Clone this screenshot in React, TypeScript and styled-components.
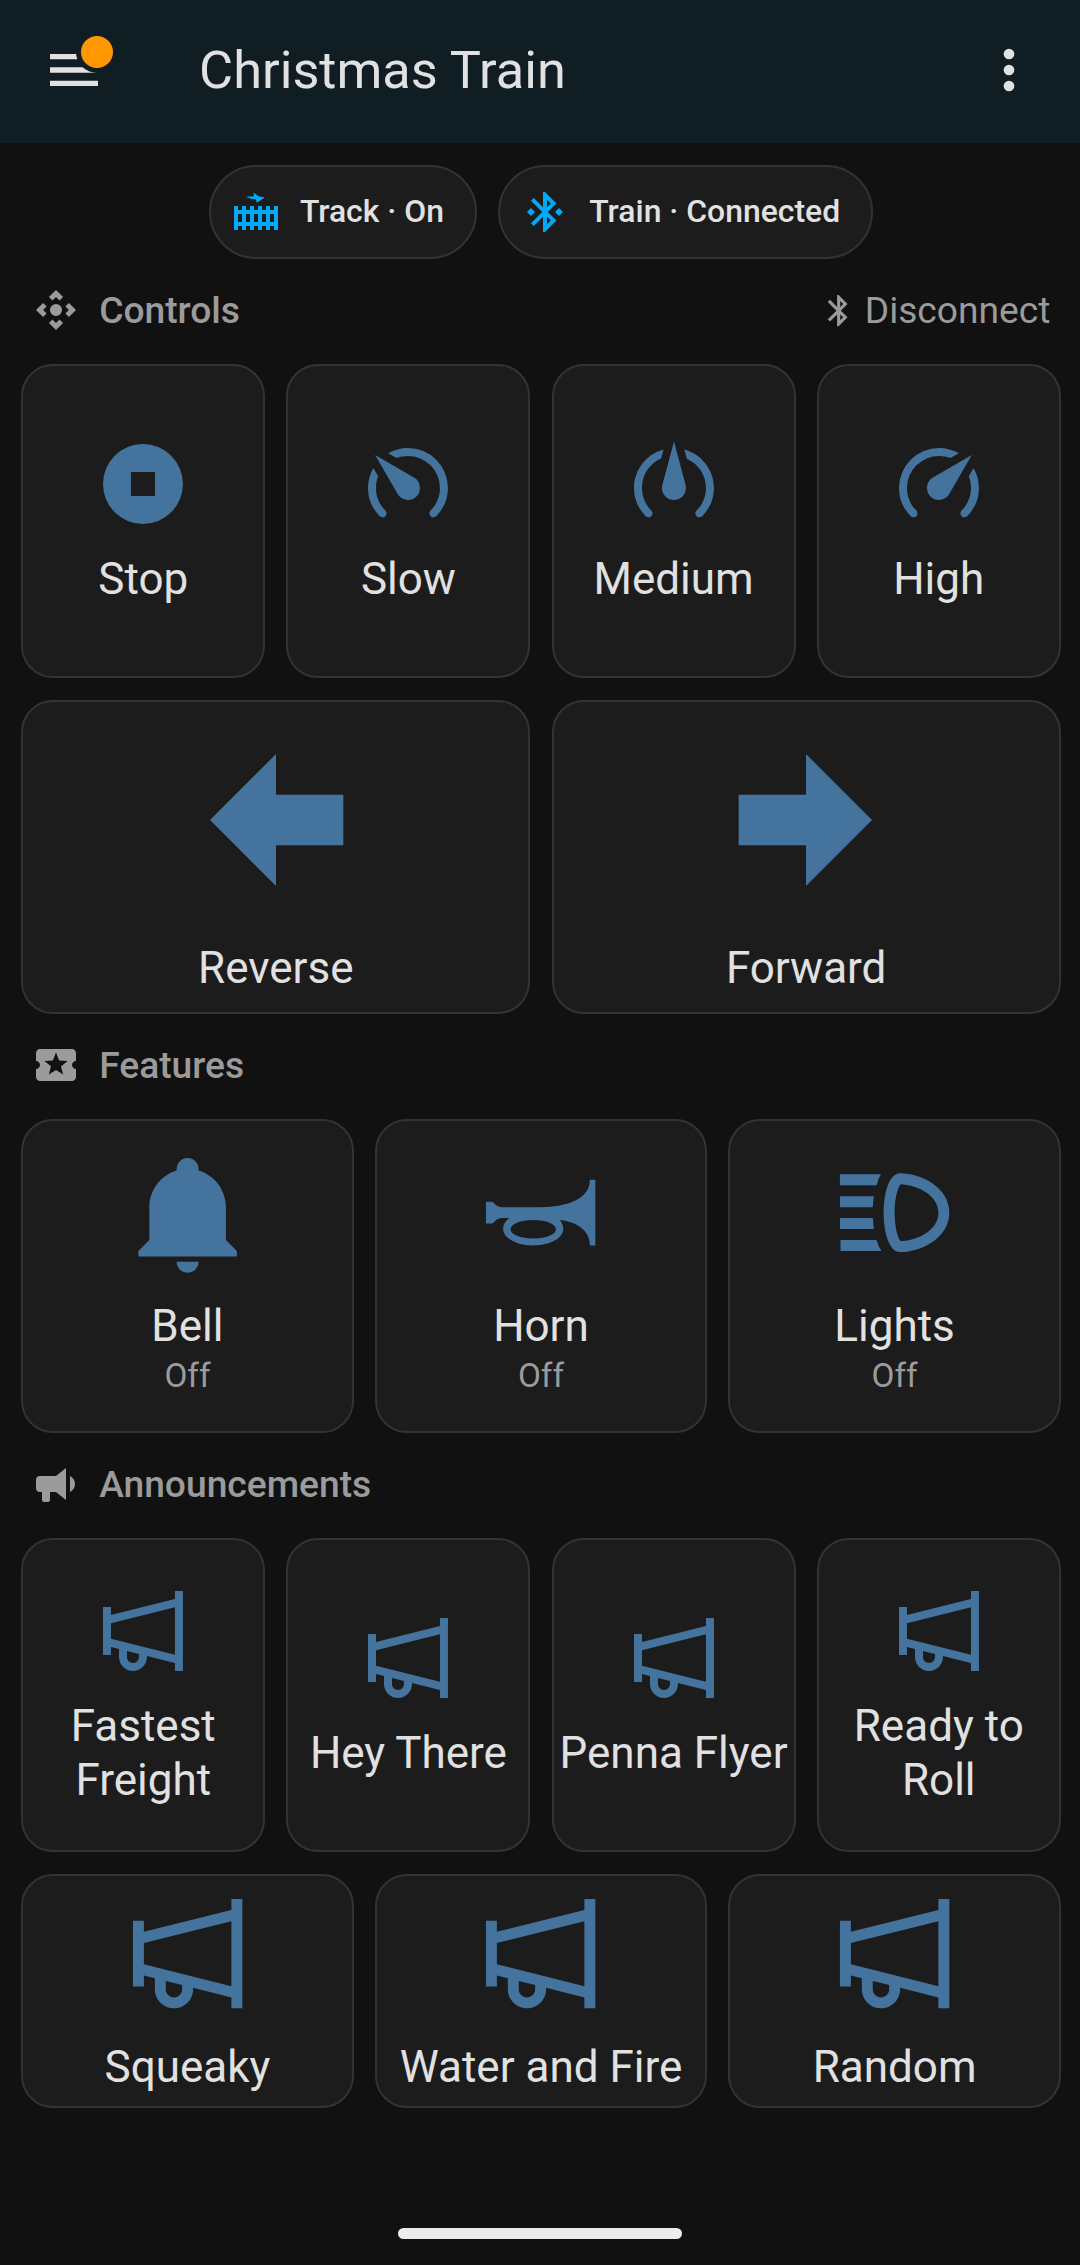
import React from "react";
import styled, { createGlobalStyle } from "styled-components";

const color = {
  page: "#111111",
  header: "#101e24",
  card: "#1c1c1c",
  outline: "#333333",
  text: "#e1e1e1",
  muted: "#9b9b9b",
  icon: "#44739e",
  active: "#03a9f4",
  badge: "#ff9800",
};

const path = {
  menu: "M3,6H21V8H3V6M3,11H21V13H3V11M3,16H21V18H3V16Z",
  dots: "M12,16A2,2 0 0,1 14,18A2,2 0 0,1 12,20A2,2 0 0,1 10,18A2,2 0 0,1 12,16M12,10A2,2 0 0,1 14,12A2,2 0 0,1 12,14A2,2 0 0,1 10,12A2,2 0 0,1 12,10M12,4A2,2 0 0,1 14,6A2,2 0 0,1 12,8A2,2 0 0,1 10,6A2,2 0 0,1 12,4Z",
  fence:
    "M10.8,2.2L13.3,4.1L16.4,4.8L12.4,7.4L12,5.8L9.5,5.4L6.9,4.4L11,4.1ZM1,9H3V11H5V9H7V11H9V9H11V11H13V9H15V11H17V9H19V11H21V9H23V21H21V19H19V21H17V19H15V21H13V19H11V21H9V19H7V21H5V19H3V21H1ZM3,13V17H5V13ZM7,13V17H9V13ZM11,13V17H13V13ZM15,13V17H17V13ZM19,13V17H21V13Z",
  bluetoothConnect:
    "M19,10L17,12L19,14L21,12M14.88,16.29L13,18.17V14.41M13,5.83L14.88,7.71L13,9.58M17.71,7.71L12,2H11V9.58L6.41,5L5,6.41L10.59,12L5,17.58L6.41,19L11,14.41V22H12L17.71,16.29L13.41,12M7,12L5,10L3,12L5,14L7,12Z",
  bluetooth:
    "M14.88,16.29L13,18.17V14.41M13,5.83L14.88,7.71L13,9.58M17.71,7.71L12,2H11V9.58L6.41,5L5,6.41L10.59,12L5,17.58L6.41,19L11,14.41V22H12L17.71,16.29L13.41,12L17.71,7.71Z",
  cameraControl:
    "M15.54 5.54L13.77 7.3 12 5.54 10.23 7.3 8.46 5.54 12 2zM18.46 15.54l-1.76-1.77L18.46 12l-1.76-1.77 1.76-1.77L22 12zM8.46 18.46l1.77-1.76L12 18.46l1.77-1.76 1.77 1.76L12 22zM5.54 8.46l1.76 1.77L5.54 12l1.76 1.77-1.76 1.77L2 12zM12 9a3 3 0 1 0 0 6a3 3 0 1 0 0-6z",
  activity:
    "M20 12c0-1.1.9-2 2-2V6c0-1.1-.9-2-2-2H4c-1.1 0-1.99.9-1.99 2v4c1.1 0 1.99.9 1.99 2s-.89 2-2 2v4c0 1.1.9 2 2 2h16c1.1 0 2-.9 2-2v-4c-1.1 0-2-.9-2-2zm-4.42 4.8L12 14.5l-3.58 2.3 1.08-4.12-3.29-2.69 4.24-.25L12 5.8l1.54 3.95 4.24.25-3.29 2.69 1.09 4.11z",
  bullhorn:
    "M12,8H4A2,2 0 0,0 2,10V14A2,2 0 0,0 4,16H5V20A1,1 0 0,0 6,21H8A1,1 0 0,0 9,20V16H12L17,20V4L12,8M21.5,12C21.5,13.71 20.54,15.26 19,16V8C20.53,8.75 21.5,10.3 21.5,12Z",
  stop: "M12,2A10,10 0 0,0 2,12A10,10 0 0,0 12,22A10,10 0 0,0 22,12A10,10 0 0,0 12,2M9,9H15V15H9",
  gauge:
    "M12,16A3,3 0 0,1 9,13C9,11.88 9.61,10.9 10.5,10.39L20.21,4.77L14.68,14.35C14.18,15.33 13.17,16 12,16M12,3C13.81,3 15.5,3.5 16.97,4.32L14.87,5.53C14,5.19 13,5 12,5A8,8 0 0,0 4,13C4,15.21 4.89,17.21 6.34,18.65H6.35C6.74,19.04 6.74,19.67 6.35,20.06C5.96,20.45 5.32,20.45 4.93,20.07V20.07C3.12,18.26 2,15.76 2,13A10,10 0 0,1 12,3M22,13C22,15.76 20.88,18.26 19.07,20.07V20.07C18.68,20.45 18.05,20.45 17.66,20.06C17.27,19.67 17.27,19.04 17.66,18.65V18.65C19.11,17.2 20,15.21 20,13C20,12 19.81,11 19.46,10.1L20.67,8C21.5,9.5 22,11.18 22,13Z",
  gaugeMedium:
    "M12 1.38L9.14 12.06C8.8 13.1 9.04 14.29 9.86 15.12C11.04 16.29 12.94 16.29 14.11 15.12C14.9 14.33 15.16 13.2 14.89 12.21M14.6 3.35L15.22 5.68C18.04 6.92 20 9.73 20 13C20 15.21 19.11 17.21 17.66 18.65H17.65C17.26 19.04 17.26 19.67 17.65 20.06C18.04 20.45 18.68 20.45 19.07 20.07C20.88 18.26 22 15.76 22 13C22 8.38 18.86 4.5 14.6 3.35M9.4 3.36C5.15 4.5 2 8.4 2 13C2 15.76 3.12 18.26 4.93 20.07C5.32 20.45 5.95 20.45 6.34 20.06C6.73 19.67 6.73 19.04 6.34 18.65C4.89 17.2 4 15.21 4 13C4 9.65 5.94 6.86 8.79 5.65L9.4 3.36Z",
  arrowLeft: "M20,9V15H12V19.84L4.16,12L12,4.16V9H20Z",
  arrowRight: "M4,15V9H12V4.16L19.84,12L12,19.84V15H4Z",
  bell: "M21,19V20H3V19L5,17V11C5,7.9 7.03,5.17 10,4.29C10,4.19 10,4.1 10,4A2,2 0 0,1 12,2A2,2 0 0,1 14,4C14,4.1 14,4.19 14,4.29C16.97,5.17 19,7.9 19,11V17L21,19M14,21A2,2 0 0,1 12,23A2,2 0 0,1 10,21",
  bugle:
    "M2,10H3.2C4.1,10.9 4.4,11 5.2,11H12C16.5,11 21,9.7 21,6H22V18H21C21,14.5 17.3,13.5 15.5,13.35C15.9,13.85 16.15,14.4 16.15,15C16.15,16.65 13.7,18 10.65,18C7.6,18 5.15,16.65 5.15,15C5.15,14.2 5.6,13.5 6.3,13H5.2C4.4,13 4.1,13.1 3.2,14H2ZM10.65,13.35C8.3,13.35 6.5,14.1 6.5,15.05C6.5,16 8.3,16.75 10.65,16.75C13,16.75 14.8,16 14.8,15.05C14.8,14.1 13,13.35 10.65,13.35Z",
  lights:
    "M13,4.8C9,4.8 9,19.2 13,19.2C17,19.2 22,16.5 22,12C22,7.5 17,4.8 13,4.8M13.1,17.2C12.7,16.8 12,15 12,12C12,9 12.7,7.2 13.1,6.8C16,6.9 20,8.7 20,12C20,15.3 16,17.1 13.1,17.2M2,5H9.5C9.3,5.4 9,5.8 8.9,6.4C8.8,6.6 8.8,6.8 8.7,7H2V5M8,11H2V9H8.2C8.1,9.6 8.1,10.3 8,11M8.7,17C8.9,17.8 9.2,18.4 9.6,19H2.1V17H8.7M8.2,15H2V13H8C8.1,13.7 8.1,14.4 8.2,15Z",
  megaphone:
    "M22 2H20V4L4 8V6H2V18H4V16L6 16.5V18.5C6 20.43 7.57 22 9.5 22S13 20.43 13 18.5V18.25L20 20V22H22V2M11 18.5C11 19.33 10.33 20 9.5 20S8 19.33 8 18.5V17L11 17.75V18.5M20 17.94L4 13.94V10.06L20 6.06V17.94Z",
};

type IconName = keyof typeof path;

const GlobalStyle = createGlobalStyle`
  *, *::before, *::after { box-sizing: border-box; }
  html, body { margin: 0; padding: 0; background: ${color.page}; }
  body { font-family: Roboto, "Noto Sans", sans-serif; color: ${color.text}; }
  button { font: inherit; color: inherit; background: none; border: 0; padding: 0; margin: 0; }
`;

const Svg = styled.svg<{ $size: string; $flip?: boolean }>`
  display: block;
  flex: none;
  width: ${(p) => p.$size};
  aspect-ratio: 1;
  fill: currentColor;
  fill-rule: evenodd;
  transform: ${(p) => (p.$flip ? "scaleX(-1)" : "none")};
`;

const Icon = ({ name, size, flip }: { name: IconName; size: string; flip?: boolean }) => (
  <Svg viewBox="0 0 24 24" $size={size} $flip={flip} aria-hidden="true">
    <path d={path[name]} />
  </Svg>
);

const Page = styled.div`
  display: flex;
  flex-direction: column;
  width: 1080px;
  height: 2265px;
  background: ${color.page};
`;

const Header = styled.header`
  display: flex;
  align-items: center;
  flex: none;
  height: 143px;
  padding: 0 39.3px 2.3px 41.8px;
  background: ${color.header};
`;

const MenuButton = styled.button`
  position: relative;
  flex: none;
`;

const Badge = styled.span`
  position: absolute;
  top: -7.3px;
  right: -12.3px;
  width: 42px;
  height: 42px;
  border: 5px solid ${color.header};
  border-radius: 50%;
  background: ${color.badge};
`;

const Title = styled.h1`
  flex: 1;
  margin: 0 0 0 93.3px;
  font-size: 52.3px;
  font-weight: 400;
  line-height: 64px;
`;

const Content = styled.main`
  display: flex;
  flex-direction: column;
  flex: 1;
  padding: 21.6px 19.33px 0 21.33px;
`;

const Chips = styled.div`
  display: flex;
  justify-content: center;
  gap: 21.33px;
`;

const Chip = styled.button`
  display: flex;
  align-items: center;
  gap: 20.33px;
  height: 94.7px;
  padding: 0 31px 0 20.67px;
  border: 2px solid ${color.outline};
  border-radius: 48px;
  background: ${color.card};
  font-size: 31.9px;
  font-weight: 500;
  line-height: 42px;
`;

const ChipLabel = styled.span`
  padding-bottom: 1.5px;
`;

const ChipIcon = styled.span`
  color: ${color.active};
`;

const SectionHead = styled.div`
  display: flex;
  align-items: center;
  justify-content: space-between;
  height: 104.7px;
  padding: 0 10.2px 2.6px 10.3px;
  color: ${color.muted};
  font-size: 37.2px;
  line-height: 48px;
`;

const SectionTitle = styled.h2`
  display: flex;
  align-items: center;
  gap: 19.5px;
  margin: 0;
  font-size: inherit;
  font-weight: 500;
`;

const SectionAction = styled.button`
  display: flex;
  align-items: center;
  gap: 7px;
`;

const Row = styled.div<{ $columns: number; $height: number }>`
  display: grid;
  grid-template-columns: repeat(${(p) => p.$columns}, minmax(0, 1fr));
  gap: 21.33px;
  height: ${(p) => p.$height}px;

  & + & {
    margin-top: 21.5px;
  }
`;

const Tile = styled.button`
  display: flex;
  flex-direction: column;
  align-items: center;
  justify-content: center;
  border: 2px solid ${color.outline};
  border-radius: 32px;
  background: ${color.card};
`;

const TileIcon = styled.span`
  display: flex;
  justify-content: center;
  width: 100%;
  color: ${color.icon};
`;

const TileLabel = styled.span`
  margin-top: 21px;
  font-size: 44px;
  line-height: 53.33px;
  text-align: center;
`;

const TileState = styled.span`
  margin: 3px 0 9.5px;
  color: ${color.muted};
  font-size: 33.3px;
  line-height: 39.5px;
`;

const HomeIndicator = styled.div`
  align-self: center;
  flex: none;
  width: 284px;
  height: 11px;
  margin-bottom: 26px;
  border-radius: 6px;
  background: #ececec;
`;

interface TileData {
  icon: IconName;
  label: string;
  state?: string;
  flip?: boolean;
}

const speeds: TileData[] = [
  { icon: "stop", label: "Stop" },
  { icon: "gauge", label: "Slow", flip: true },
  { icon: "gaugeMedium", label: "Medium" },
  { icon: "gauge", label: "High" },
];

const directions: TileData[] = [
  { icon: "arrowLeft", label: "Reverse" },
  { icon: "arrowRight", label: "Forward" },
];

const features: TileData[] = [
  { icon: "bell", label: "Bell", state: "Off" },
  { icon: "bugle", label: "Horn", state: "Off" },
  { icon: "lights", label: "Lights", state: "Off" },
];

const announcements: TileData[] = [
  { icon: "megaphone", label: "Fastest Freight" },
  { icon: "megaphone", label: "Hey There" },
  { icon: "megaphone", label: "Penna Flyer" },
  { icon: "megaphone", label: "Ready to Roll" },
];

const moreAnnouncements: TileData[] = [
  { icon: "megaphone", label: "Squeaky" },
  { icon: "megaphone", label: "Water and Fire" },
  { icon: "megaphone", label: "Random" },
];

const TileRow = ({ tiles, height = 314.4 }: { tiles: TileData[]; height?: number }) => (
  <Row $columns={tiles.length} $height={height}>
    {tiles.map((tile) => (
      <Tile key={tile.label}>
        <TileIcon>
          <Icon name={tile.icon} size="40%" flip={tile.flip} />
        </TileIcon>
        <TileLabel>{tile.label}</TileLabel>
        {tile.state && <TileState>{tile.state}</TileState>}
      </Tile>
    ))}
  </Row>
);

const Section = ({
  icon,
  title,
  children,
}: {
  icon: IconName;
  title: string;
  children?: React.ReactNode;
}) => (
  <SectionHead>
    <SectionTitle>
      <Icon name={icon} size="48px" />
      {title}
    </SectionTitle>
    {children}
  </SectionHead>
);

export default function App() {
  return (
    <>
      <GlobalStyle />
      <Page>
        <Header>
          <MenuButton aria-label="Menu">
            <Icon name="menu" size="64px" />
            <Badge />
          </MenuButton>
          <Title>Christmas Train</Title>
          <Icon name="dots" size="64px" />
        </Header>
        <Content>
          <Chips>
            <Chip>
              <ChipIcon>
                <Icon name="fence" size="48px" />
              </ChipIcon>
              <ChipLabel>Track · On</ChipLabel>
            </Chip>
            <Chip>
              <ChipIcon>
                <Icon name="bluetoothConnect" size="48px" />
              </ChipIcon>
              <ChipLabel>Train · Connected</ChipLabel>
            </Chip>
          </Chips>
          <Section icon="cameraControl" title="Controls">
            <SectionAction>
              <Icon name="bluetooth" size="37.33px" />
              Disconnect
            </SectionAction>
          </Section>
          <TileRow tiles={speeds} />
          <TileRow tiles={directions} />
          <Section icon="activity" title="Features" />
          <TileRow tiles={features} />
          <Section icon="bullhorn" title="Announcements" />
          <TileRow tiles={announcements} />
          <TileRow tiles={moreAnnouncements} height={234.3} />
        </Content>
        <HomeIndicator />
      </Page>
    </>
  );
}
